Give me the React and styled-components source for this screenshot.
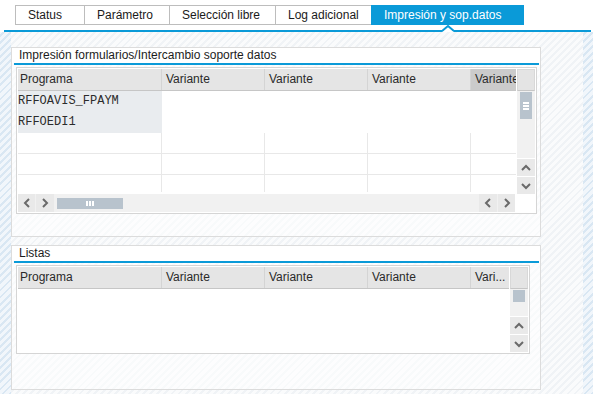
import React from "react";
import styled, { createGlobalStyle } from "styled-components";

const BLUE = "#0a9ad8";

const GlobalStyle = createGlobalStyle`
  html, body {
    margin: 0;
    padding: 0;
  }
  body {
    font-family: "Liberation Sans", Arial, sans-serif;
    font-size: 12px;
    color: #222;
    background: #fff;
  }
  #root {
    width: 593px;
    height: 394px;
    overflow: hidden;
  }
`;

const stripes = (base, line) =>
  `repeating-linear-gradient(-45deg, ${line} 0 2px, ${base} 2px 5px)`;

const Page = styled.div`
  display: flex;
  flex-direction: column;
  width: 593px;
  height: 394px;
`;

const TabBar = styled.div`
  flex-shrink: 0;
  height: 32px;
  background: #fff;
  display: flex;
  flex-direction: column;
`;

const TabRow = styled.div`
  display: flex;
  height: 20px;
  margin: 5px 0 0 15px;
`;

const Tab = styled.div`
  position: relative;
  box-sizing: border-box;
  width: ${(p) => p.$width}px;
  height: 20px;
  padding-left: 12px;
  line-height: 18px;
  white-space: nowrap;
  border: 1px solid ${(p) => (p.$active ? BLUE : "#bdbdbd")};
  background: ${(p) => (p.$active ? BLUE : "#fff")};
  color: ${(p) => (p.$active ? "#fff" : "#1a1a1a")};

  & + & {
    margin-left: -1px;
  }
`;

const Caret = styled.svg`
  position: absolute;
  top: 19px;
  left: calc(50% - 6px);
  width: 12px;
  height: 7px;
`;

const TabRule = styled.div`
  height: 2px;
  margin: 5px 2px 0 4px;
  background: ${BLUE};
`;

const Content = styled.div`
  flex: 1;
  display: flex;
`;

const Rail = styled.div`
  width: ${(p) => p.$width}px;
  flex: ${(p) => (p.$grow ? 1 : "none")};
  background: ${stripes("#f1f6fb", "#d9e7f3")};
`;

const Main = styled.div`
  width: 572px;
  display: flex;
  flex-direction: column;
  gap: 8px;
  padding-top: 15px;
  background: ${stripes("#fafbfc", "#f0f3f6")};
`;

const Panel = styled.section`
  box-sizing: border-box;
  width: 530px;
  height: ${(p) => p.$height}px;
  border: 1px solid #dcdcdc;
  background: rgba(255, 255, 255, 0.55);
`;

const PanelTitle = styled.div`
  height: 15px;
  line-height: 14px;
  padding-left: 7px;
  background: #fff;
  color: #1c1c1c;
`;

const TitleRule = styled.div`
  height: 2px;
  margin: 0 1px 0 2px;
  background: ${BLUE};
`;

const Table = styled.div`
  box-sizing: border-box;
  width: ${(p) => p.$width}px;
  margin: 2px 0 0 4px;
  padding: 1px;
  border: 1px solid #d5d5d5;
  background: #fff;
  display: flex;
  align-items: flex-start;
`;

const Grid = styled.div`
  width: ${(p) => p.$width}px;
  display: flex;
  flex-direction: column;
`;

const HeaderRow = styled.div`
  display: flex;
  height: 22px;
  box-sizing: border-box;
  border-bottom: 1px solid #c6c6c6;
  background: #e5e5e5;
`;

const HeaderCell = styled.div`
  box-sizing: border-box;
  width: ${(p) => p.$width}px;
  padding-left: ${(p) => (p.$first ? 2 : 4)}px;
  line-height: 21px;
  color: #2a2a2a;
  white-space: nowrap;
  overflow: hidden;
  background: ${(p) => (p.$hot ? "#cbcbcb" : "transparent")};
  border-right: ${(p) => (p.$last ? "none" : "1px solid #d4d4d4")};
`;

const Body = styled.div`
  height: ${(p) => p.$height}px;
  overflow: hidden;
`;

const Row = styled.div`
  display: flex;
  height: 21px;
  flex-shrink: 0;
`;

const Cell = styled.div`
  box-sizing: border-box;
  width: ${(p) => p.$width}px;
  height: 21px;
  padding-left: 0;
  line-height: 20px;
  font-family: "Liberation Mono", "Courier New", monospace;
  font-size: 12px;
  color: #2b2b2b;
  white-space: nowrap;
  background: ${(p) => (p.$key ? "#e9ecef" : "#fff")};
  border-right: ${(p) => (p.$grid && !p.$last ? "1px solid #e8e8e8" : "none")};
  border-bottom: ${(p) => (p.$grid && p.$ruled ? "1px solid #e8e8e8" : "none")};
`;

const HScroll = styled.div`
  display: flex;
  align-items: center;
  height: 18px;
  margin-top: 2px;
  margin-right: 1px;
  background: #f1f1f1;
`;

const ScrollBtn = styled.div`
  width: ${(p) => p.$size || 17}px;
  height: ${(p) => (p.$vertical ? 17 : 18)}px;
  margin-left: ${(p) => p.$gap || 0}px;
  margin-top: ${(p) => (p.$vertical ? 1 : 0)}px;
  display: flex;
  align-items: center;
  justify-content: center;
  background: #e9e9e9;
  flex-shrink: 0;
`;

const HThumb = styled.div`
  width: 66px;
  height: 11px;
  margin-left: 3px;
  background: #b8c3cd;
  display: flex;
  align-items: center;
  justify-content: center;
  gap: 1px;
`;

const Spacer = styled.div`
  flex: 1;
`;

const GripBar = styled.span`
  display: block;
  width: ${(p) => (p.$horizontal ? 6 : 2)}px;
  height: ${(p) => (p.$horizontal ? 2 : 5)}px;
  background: #fff;
`;

const VScroll = styled.div`
  width: 18px;
  margin-left: 1px;
  display: flex;
  flex-direction: column;
`;

const Corner = styled.div`
  box-sizing: border-box;
  height: 22px;
  background: #e4e4e4;
  border: 1px solid #d8d8d8;
  border-bottom-color: #c6c6c6;
`;

const Track = styled.div`
  height: ${(p) => p.$height}px;
  padding: 1px 3px 0;
  background: #f1f1f1;
`;

const VThumb = styled.div`
  height: ${(p) => p.$height}px;
  background: #b8c3cd;
  display: flex;
  flex-direction: column;
  align-items: center;
  justify-content: center;
  gap: 1px;
`;

const Chevron = ({ dir }) => {
  const pts = {
    left: "6,1 2,5 6,9",
    right: "2,1 6,5 2,9",
    up: "1,6 5,2 9,6",
    down: "1,2 5,6 9,2",
  }[dir];
  const vertical = dir === "up" || dir === "down";
  return (
    <svg width={vertical ? 10 : 8} height={vertical ? 8 : 10}>
      <polyline
        points={pts}
        fill="none"
        stroke="#6a6a6a"
        strokeWidth="2"
      />
    </svg>
  );
};

const Grip = ({ horizontal }) => (
  <>
    <GripBar $horizontal={horizontal} />
    <GripBar $horizontal={horizontal} />
    <GripBar $horizontal={horizontal} />
  </>
);

const tabs = [
  { label: "Status", width: 70 },
  { label: "Parámetro", width: 86 },
  { label: "Selección libre", width: 107 },
  { label: "Log adicional", width: 97 },
  { label: "Impresión y sop.datos", width: 153, active: true },
];

const columns1 = [
  { label: "Programa", width: 144 },
  { label: "Variante", width: 103 },
  { label: "Variante", width: 103 },
  { label: "Variante", width: 103 },
  { label: "Variante", width: 45, hot: true },
];

const columns2 = [
  { label: "Programa", width: 144 },
  { label: "Variante", width: 103 },
  { label: "Variante", width: 103 },
  { label: "Variante", width: 103 },
  { label: "Vari...", width: 38 },
];

const programs = ["RFFOAVIS_FPAYM", "RFFOEDI1", null, null, null];

const Header = ({ columns }) => (
  <HeaderRow>
    {columns.map((c, i) => (
      <HeaderCell
        key={i}
        $width={c.width}
        $first={i === 0}
        $last={i === columns.length - 1}
        $hot={c.hot}
      >
        {c.label}
      </HeaderCell>
    ))}
  </HeaderRow>
);

const FormsTable = () => (
  <Table $width={521}>
    <Grid $width={498}>
      <Header columns={columns1} />
      <Body $height={101}>
        {programs.map((name, r) => (
          <Row key={r}>
            {columns1.map((c, i) => (
              <Cell
                key={i}
                $width={c.width}
                $key={name && i === 0}
                $grid={!name}
                $ruled={r < programs.length - 1}
                $last={i === columns1.length - 1}
              >
                {i === 0 ? name : null}
              </Cell>
            ))}
          </Row>
        ))}
      </Body>
      <HScroll>
        <ScrollBtn>
          <Chevron dir="left" />
        </ScrollBtn>
        <ScrollBtn $size={18} $gap={1}>
          <Chevron dir="right" />
        </ScrollBtn>
        <HThumb>
          <Grip />
        </HThumb>
        <Spacer />
        <ScrollBtn $size={18}>
          <Chevron dir="left" />
        </ScrollBtn>
        <ScrollBtn $size={17} $gap={1}>
          <Chevron dir="right" />
        </ScrollBtn>
      </HScroll>
    </Grid>
    <VScroll>
      <Corner />
      <Track $height={66}>
        <VThumb $height={27}>
          <Grip horizontal />
        </VThumb>
      </Track>
      <ScrollBtn $size={18} $vertical>
        <Chevron dir="up" />
      </ScrollBtn>
      <ScrollBtn $size={18} $vertical>
        <Chevron dir="down" />
      </ScrollBtn>
    </VScroll>
  </Table>
);

const ListsTable = () => (
  <Table $width={514}>
    <Grid $width={491}>
      <Header columns={columns2} />
      <Body $height={62} />
    </Grid>
    <VScroll>
      <Corner />
      <Track $height={26}>
        <VThumb $height={12} />
      </Track>
      <ScrollBtn $size={18} $vertical>
        <Chevron dir="up" />
      </ScrollBtn>
      <ScrollBtn $size={18} $vertical>
        <Chevron dir="down" />
      </ScrollBtn>
    </VScroll>
  </Table>
);

const App = () => (
  <>
    <GlobalStyle />
    <Page>
      <TabBar>
        <TabRow>
          {tabs.map((t) => (
            <Tab key={t.label} $width={t.width} $active={t.active}>
              {t.label}
              {t.active && (
                <Caret viewBox="0 0 12 7">
                  <polygon points="0,7 6,1 12,7" fill="#fff" />
                  <polyline
                    points="0,6 6,1 12,6"
                    fill="none"
                    stroke={BLUE}
                    strokeWidth="2"
                  />
                </Caret>
              )}
            </Tab>
          ))}
        </TabRow>
        <TabRule />
      </TabBar>
      <Content>
        <Rail $width={11} />
        <Main>
          <Panel $height={190}>
            <PanelTitle>Impresión formularios/Intercambio soporte datos</PanelTitle>
            <TitleRule />
            <FormsTable />
          </Panel>
          <Panel $height={145}>
            <PanelTitle>Listas</PanelTitle>
            <TitleRule />
            <ListsTable />
          </Panel>
        </Main>
        <Rail $grow />
      </Content>
    </Page>
  </>
);

export default App;
